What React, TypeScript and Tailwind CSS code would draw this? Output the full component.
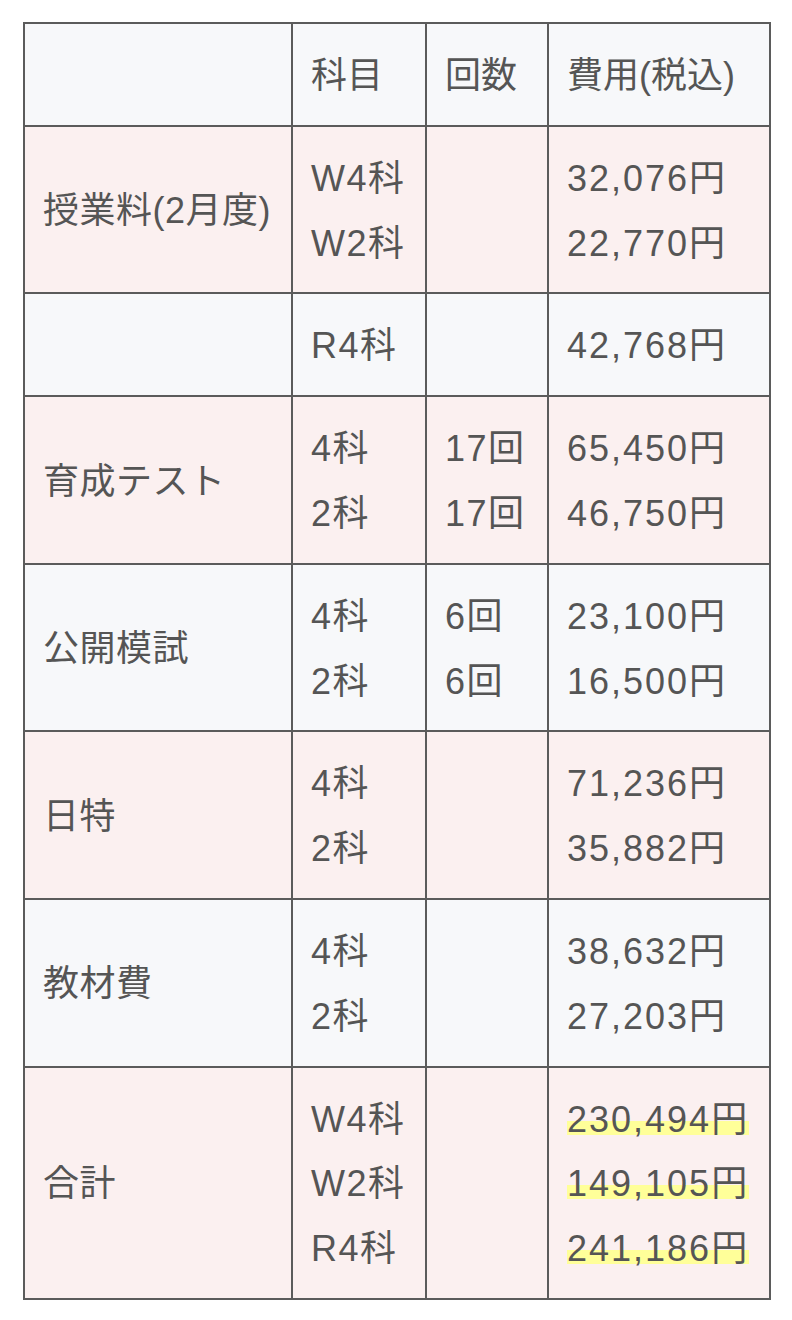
import React from "react";

type Row = {
  label: string;
  subjects: string[];
  counts: string[];
  costs: string[];
  pink: boolean;
  highlight?: boolean;
};

const rows: Row[] = [
  { label: "授業料(2月度)", subjects: ["W4科", "W2科"], counts: [], costs: ["32,076円", "22,770円"], pink: true },
  { label: "", subjects: ["R4科"], counts: [], costs: ["42,768円"], pink: false },
  { label: "育成テスト", subjects: ["4科", "2科"], counts: ["17回", "17回"], costs: ["65,450円", "46,750円"], pink: true },
  { label: "公開模試", subjects: ["4科", "2科"], counts: ["6回", "6回"], costs: ["23,100円", "16,500円"], pink: false },
  { label: "日特", subjects: ["4科", "2科"], counts: [], costs: ["71,236円", "35,882円"], pink: true },
  { label: "教材費", subjects: ["4科", "2科"], counts: [], costs: ["38,632円", "27,203円"], pink: false },
  {
    label: "合計",
    subjects: ["W4科", "W2科", "R4科"],
    counts: [],
    costs: ["230,494円", "149,105円", "241,186円"],
    pink: true,
    highlight: true,
  },
];

const cell =
  "border-r-2 border-b-2 border-[#5b5b5b] px-[18px] pt-[20px] pb-[16px] align-middle text-left font-normal whitespace-nowrap";

function Lines({ items, highlight }: { items: string[]; highlight?: boolean }) {
  return (
    <>
      {items.map((t, i) => (
        <div key={i}>
          {highlight ? (
            <span className="bg-[linear-gradient(transparent_54%,#ffff99_54%,#ffff99_88%,transparent_88%)]">{t}</span>
          ) : (
            t
          )}
        </div>
      ))}
    </>
  );
}

export default function App() {
  return (
    <div className="bg-white min-h-[1320px] pt-[22px] pl-[23px]">
      <table
        className="border-separate border-spacing-0 table-fixed border-l-2 border-t-2 border-[#5b5b5b] text-[36px] leading-[1.8] text-[#555555] w-[748px]"
        style={{ fontFamily: '"Liberation Sans", "Noto Sans CJK JP", sans-serif' }}
      >
        <colgroup>
          <col className="w-[268px]" />
          <col className="w-[134px]" />
          <col className="w-[122px]" />
          <col className="w-[222px]" />
        </colgroup>
        <thead>
          <tr className="bg-[#f7f8fa]">
            <th className={cell}></th>
            <th className={cell}>科目</th>
            <th className={cell}>回数</th>
            <th className={cell}>費用(税込)</th>
          </tr>
        </thead>
        <tbody>
          {rows.map((r, i) => (
            <tr key={i} className={r.pink ? "bg-[#fbf0f0]" : "bg-[#f7f8fa]"}>
              <td className={`${cell} tracking-[0.5px]`}>{r.label}</td>
              <td className={`${cell} tracking-[1.5px]`}>
                <Lines items={r.subjects} />
              </td>
              <td className={`${cell} tracking-[1.5px]`}>
                <Lines items={r.counts} />
              </td>
              <td className={`${cell} tracking-[2px]`}>
                <Lines items={r.costs} highlight={r.highlight} />
              </td>
            </tr>
          ))}
        </tbody>
      </table>
    </div>
  );
}
